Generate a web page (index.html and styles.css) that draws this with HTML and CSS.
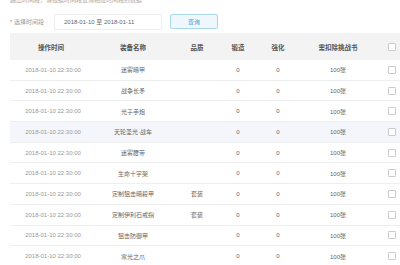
FILE: index.html
```html
<!doctype html>
<html lang="zh-CN">
<head>
  <meta charset="UTF-8" />
  <title>装备记录</title>
  <link rel="stylesheet" href="styles.css">
</head>
<body>
<div class="page">
  <p class="tip">超出时间段，请根据时间段查询相应时间段的数据</p>
  <div class="filter">
    <label class="filter-label"><span class="required">*</span> 选择时间段</label>
    <div class="date-input">2018-01-10 至 2018-01-11</div>
    <button class="query-btn">查询</button>
  </div>
  <table class="record-table">
    <colgroup>
      <col class="col-time"><col class="col-name"><col class="col-quality">
      <col class="col-forge"><col class="col-enhance"><col class="col-cost"><col class="col-check">
    </colgroup>
    <thead>
      <tr>
        <th>操作时间</th>
        <th>装备名称</th>
        <th>品质</th>
        <th>锻造</th>
        <th>强化</th>
        <th>需扣除挑战书</th>
        <th><span class="checkbox"></span></th>
      </tr>
    </thead>
    <tbody id="rows"></tbody>
  </table>
</div>
<script>
  const records = [
    { name: '迷雾暗甲', quality: '' },
    { name: '战争长矛', quality: '' },
    { name: '光子手炮', quality: '' },
    { name: '天轮圣光·战车', quality: '', active: true },
    { name: '迷雾腰带', quality: '' },
    { name: '生命十字架', quality: '' },
    { name: '定制狙击暗殺甲', quality: '套装' },
    { name: '定制伊利石戒指', quality: '套装' },
    { name: '狙击防御甲', quality: '' },
    { name: '寒光之爪', quality: '' }
  ];
  const tbody = document.getElementById('rows');
  records.forEach(function (r) {
    const tr = document.createElement('tr');
    if (r.active) tr.className = 'active';
    tr.innerHTML = `
      <td class="time">2018-01-10 22:30:00</td>
      <td>${r.name}</td>
      <td>${r.quality}</td>
      <td>0</td>
      <td>0</td>
      <td>100张</td>
      <td><span class="checkbox"></span></td>
    `;
    tbody.appendChild(tr);
  });
</script>
</body>
</html>
```

FILE: styles.css
```css
body {
  margin: 0;
  font-family: "Liberation Sans", "Noto Sans CJK SC", sans-serif;
  background-color: #fff;
  color: #555;
  overflow: hidden;
}
.page {
  padding-left: 10px;
  width: 420px;
}
.tip {
  margin: -4px 0 0;
  height: 8px;
  font-size: 6px;
  line-height: 8px;
  color: #aaa;
}
.filter {
  display: flex;
  align-items: center;
  margin-top: 9px;
  height: 17px;
}
.filter-label {
  width: 44px;
  font-size: 6px;
  color: #999;
}
.required {
  color: #f56c6c;
}
.date-input {
  box-sizing: border-box;
  width: 108px;
  height: 16px;
  line-height: 14px;
  padding-left: 9px;
  border: 1px solid #eee;
  font-size: 6px;
  color: #666;
}
.query-btn {
  box-sizing: border-box;
  margin-left: 8px;
  width: 48px;
  height: 15px;
  padding: 0;
  border: 1px solid #a9d8ee;
  border-radius: 2px;
  background-color: #eef8fc;
  color: #4aa3d8;
  font-family: inherit;
  font-size: 6px;
}
.record-table {
  margin-top: 3px;
  width: 398px;
  border-collapse: collapse;
  table-layout: fixed;
}
.col-time { width: 82px; }
.col-name { width: 82px; }
.col-quality { width: 46px; }
.col-forge { width: 36px; }
.col-enhance { width: 44px; }
.col-cost { width: 76px; }
.col-check { width: 32px; }
.record-table th {
  height: 27px;
  padding: 0;
  background-color: #f3f3f3;
  font-size: 6.5px;
  font-weight: bold;
  color: #555;
  text-align: center;
}
.record-table td {
  height: 19.7px;
  padding: 0;
  border-bottom: 1px solid #eee;
  font-size: 6px;
  color: #666;
  text-align: center;
  white-space: nowrap;
}
.record-table td.time {
  color: #999;
  padding-left: 4px;
}
.record-table tr.active td {
  background-color: #f4f6fb;
}
.checkbox {
  display: inline-block;
  box-sizing: border-box;
  width: 8px;
  height: 8px;
  border: 1px solid #ccc;
  border-radius: 1px;
  background-color: #fff;
  vertical-align: middle;
}
```
